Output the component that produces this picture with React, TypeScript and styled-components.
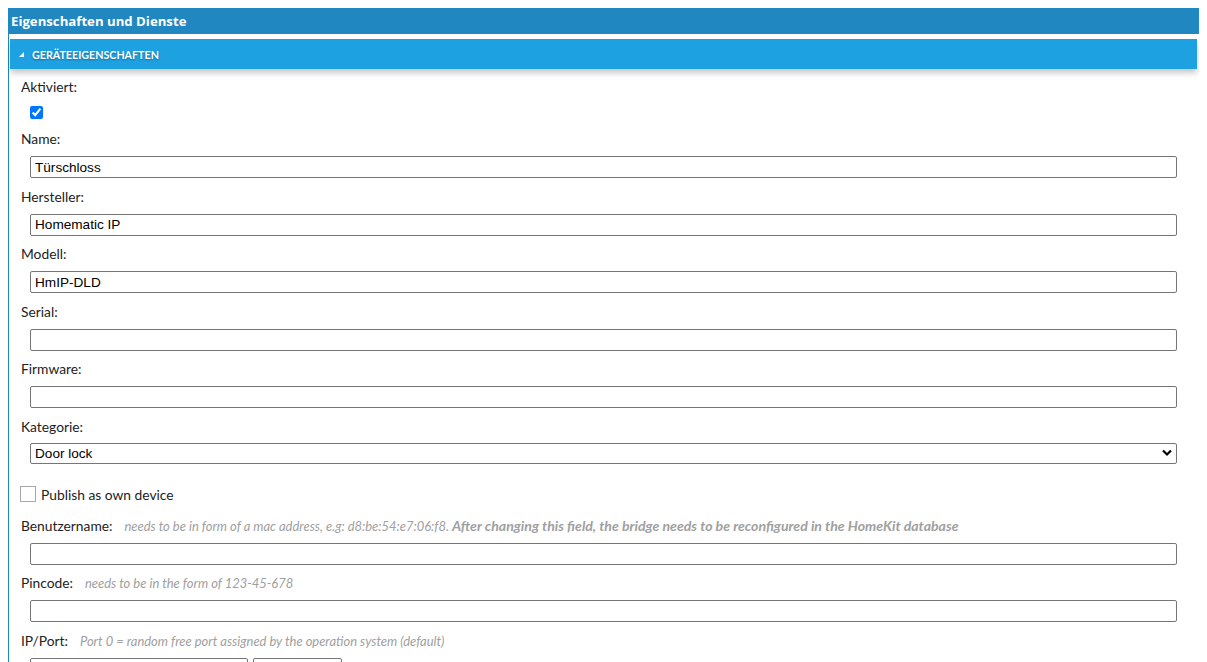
import React from "react";
import styled, { createGlobalStyle } from "styled-components";

const GlobalStyle = createGlobalStyle`
  html, body { background: #ffffff; }
  body {
    margin: 8px;
    font-family: Lato, "Segoe UI", "Noto Sans", sans-serif;
    font-size: 13.8px;
    color: #222222;
  }
  * { box-sizing: border-box; }
`;

const Panel = styled.section`
  width: 1194px;
  border: 1px solid #2187c1;
  background: #ffffff;
`;

const PanelHeader = styled.header`
  height: 25px;
  background: #2187c1;
  color: #ffffff;
  font-family: "Open Sans", "Noto Sans", sans-serif;
  font-weight: 700;
  font-size: 13.2px;
  line-height: 25px;
  padding-left: 2px;
`;

const PanelBody = styled.div`
  padding: 5px 4px 0 1px;
`;

const AccordionHeader = styled.div`
  height: 30px;
  background: #1ea1e1;
  box-shadow: 0 4px 6px rgba(0, 0, 0, 0.22);
  display: flex;
  align-items: center;
  gap: 8px;
  padding-left: 9px;
  color: #ffffff;
  font-weight: 700;
  font-size: 10.7px;
  text-transform: uppercase;
  text-shadow: 0 1px 2px rgba(0, 0, 0, 0.35);
`;

const Triangle = styled.span`
  width: 0;
  height: 0;
  border-style: solid;
  border-width: 0 0 5px 5px;
  border-color: transparent transparent #ffffff transparent;
  margin-top: 1px;
`;

const Form = styled.div`
  padding: 9px 20px 0 11px;
`;

const Label = styled.div`
  line-height: 18px;
  color: #222222;
  white-space: nowrap;
`;

const Hint = styled.span<{ $bold?: boolean }>`
  font-style: italic;
  font-size: ${(p) => (p.$bold ? 14.1 : 12.95)}px;
  color: #a0a0a0;
  font-weight: ${(p) => (p.$bold ? 700 : 400)};
`;

const HintGroup = styled.span`
  margin-left: 12px;
`;

const TextInput = styled.input<{ $w?: number }>`
  display: block;
  width: ${(p) => p.$w ?? 1147}px;
  height: 22px;
  margin: 8px 0 9.5px 9px;
  border: 1px solid #767676;
  border-radius: 2px;
  padding: 1px 4px;
  font-family: "Liberation Sans", Arial, sans-serif;
  font-size: 13.6px;
  color: #000000;
  background: #ffffff;
  outline: none;
`;

const CheckRow = styled.div`
  margin: 10px 0 11px 9px;
  height: 13px;
  display: flex;
`;

const NativeCheck = styled.input`
  margin: 0;
  width: 13px;
  height: 13px;
  accent-color: #0075ff;
`;

const SelectWrap = styled.div`
  position: relative;
  width: 1147px;
  margin: 7px 0 0 9px;
`;

const Select = styled.select`
  display: block;
  width: 100%;
  height: 21px;
  appearance: none;
  -webkit-appearance: none;
  border: 1px solid #767676;
  border-radius: 2px;
  padding: 0 4px;
  font-family: "Liberation Sans", Arial, sans-serif;
  font-size: 13.6px;
  color: #000000;
  background: #ffffff;
  outline: none;
`;

const Chevron = styled.svg`
  position: absolute;
  right: 5px;
  top: 6px;
  pointer-events: none;
`;

const PublishRow = styled.label`
  display: flex;
  align-items: center;
  gap: 5px;
  margin: 22px 0 14px -1px;
  color: #222222;
`;

const Box = styled.span`
  width: 16px;
  height: 16px;
  border: 1px solid #a8a8a8;
  background: #ffffff;
`;

const PortRow = styled.div`
  display: flex;
  gap: 5px;
  margin-left: 9px;
  margin-top: 8px;
`;

const PortInput = styled(TextInput)`
  margin: 0;
`;

const Field: React.FC<{ label: string; value?: string }> = ({ label, value }) => (
  <>
    <Label>{label}</Label>
    <TextInput type="text" defaultValue={value ?? ""} />
  </>
);

export default function App() {
  return (
    <>
      <GlobalStyle />
      <Panel>
        <PanelHeader>Eigenschaften und Dienste</PanelHeader>
        <PanelBody>
          <AccordionHeader>
            <Triangle />
            <span>Geräteeigenschaften</span>
          </AccordionHeader>
          <Form>
            <Label>Aktiviert:</Label>
            <CheckRow>
              <NativeCheck type="checkbox" defaultChecked />
            </CheckRow>
            <Field label="Name:" value="Türschloss" />
            <Field label="Hersteller:" value="Homematic IP" />
            <Field label="Modell:" value="HmIP-DLD" />
            <Field label="Serial:" />
            <Field label="Firmware:" />
            <Label>Kategorie:</Label>
            <SelectWrap>
              <Select defaultValue="doorlock">
                <option value="doorlock">Door lock</option>
              </Select>
              <Chevron width="10" height="8" viewBox="0 0 10 8">
                <path d="M1 1.5 L5 5.5 L9 1.5" fill="none" stroke="#000" strokeWidth="2.2" />
              </Chevron>
            </SelectWrap>
            <PublishRow>
              <Box />
              <span>Publish as own device</span>
            </PublishRow>
            <Label>
              Benutzername:
              <HintGroup>
                <Hint>needs to be in form of a mac address, e.g: d8:be:54:e7:06:f8. </Hint>
                <Hint $bold>After changing this field, the bridge needs to be reconfigured in the HomeKit database</Hint>
              </HintGroup>
            </Label>
            <TextInput type="text" />
            <Label>
              Pincode:
              <HintGroup>
                <Hint>needs to be in the form of 123-45-678</Hint>
              </HintGroup>
            </Label>
            <TextInput type="text" />
            <Label>
              IP/Port:
              <HintGroup>
                <Hint>Port 0 = random free port assigned by the operation system (default)</Hint>
              </HintGroup>
            </Label>
            <PortRow>
              <PortInput type="text" $w={218} />
              <PortInput type="text" $w={89} />
            </PortRow>
          </Form>
        </PanelBody>
      </Panel>
    </>
  );
}
